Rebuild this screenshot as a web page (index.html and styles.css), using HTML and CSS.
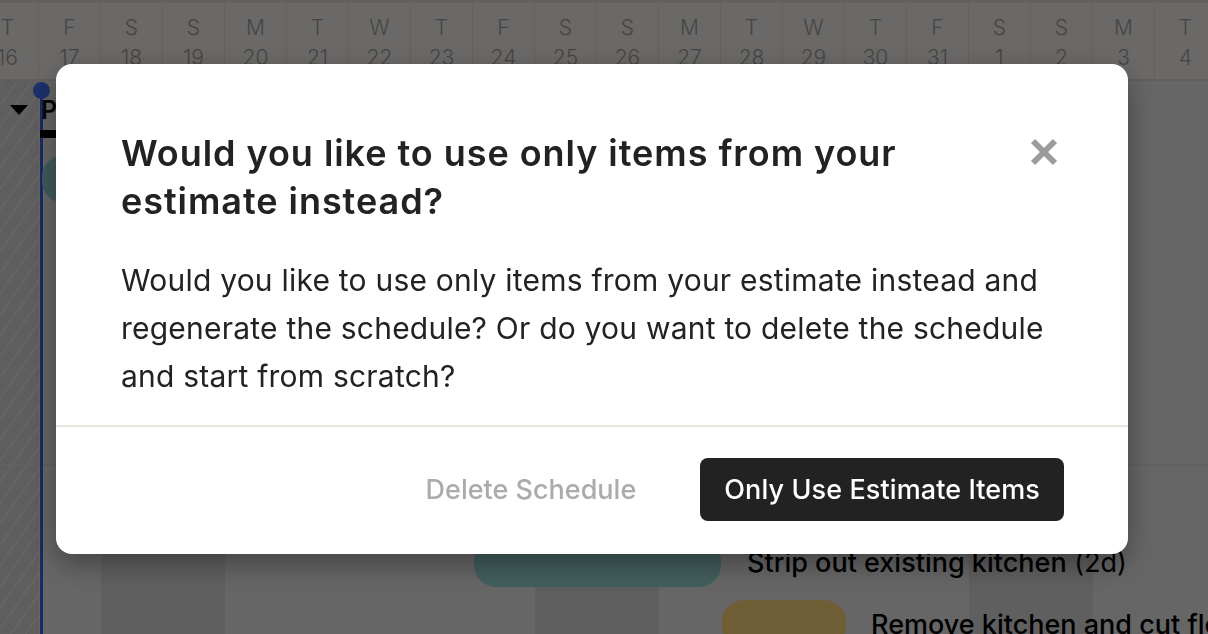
FILE: index.html
```html
<!DOCTYPE html>
<html lang="en">
<head>
<meta charset="utf-8">
<title>Schedule</title>
<link rel="stylesheet" href="styles.css">
</head>
<body>
<div class="app">
  <div class="days">
    <div class="day"><span>T</span><span>16</span></div>
    <div class="day"><span>F</span><span>17</span></div>
    <div class="day weekend"><span>S</span><span>18</span></div>
    <div class="day weekend"><span>S</span><span>19</span></div>
    <div class="day"><span>M</span><span>20</span></div>
    <div class="day"><span>T</span><span>21</span></div>
    <div class="day"><span>W</span><span>22</span></div>
    <div class="day"><span>T</span><span>23</span></div>
    <div class="day"><span>F</span><span>24</span></div>
    <div class="day weekend"><span>S</span><span>25</span></div>
    <div class="day weekend"><span>S</span><span>26</span></div>
    <div class="day"><span>M</span><span>27</span></div>
    <div class="day"><span>T</span><span>28</span></div>
    <div class="day"><span>W</span><span>29</span></div>
    <div class="day"><span>T</span><span>30</span></div>
    <div class="day"><span>F</span><span>31</span></div>
    <div class="day weekend"><span>S</span><span>1</span></div>
    <div class="day weekend"><span>S</span><span>2</span></div>
    <div class="day"><span>M</span><span>3</span></div>
    <div class="day"><span>T</span><span>4</span></div>
  </div>
  <div class="chart">
    <div class="cols">
      <div class="col past"></div>
      <div class="col"></div>
      <div class="col weekend"></div>
      <div class="col weekend"></div>
      <div class="col"></div>
      <div class="col"></div>
      <div class="col"></div>
      <div class="col"></div>
      <div class="col"></div>
      <div class="col weekend"></div>
      <div class="col weekend"></div>
      <div class="col"></div>
      <div class="col"></div>
      <div class="col"></div>
      <div class="col"></div>
      <div class="col"></div>
      <div class="col weekend"></div>
      <div class="col weekend"></div>
      <div class="col"></div>
      <div class="col"></div>
    </div>
    <div class="row-line"></div>
    <div class="today-line"></div>
    <div class="today-dot"></div>
    <div class="group">
      <span class="caret"></span>
      <span class="group-name">Phase 1</span>
    </div>
    <div class="summary-bar"></div>
    <div class="bar teal-top"></div>
    <div class="bar strip"></div>
    <div class="task-label strip-label"><b>Strip out existing kitchen</b> (2d)</div>
    <div class="bar remove"></div>
    <div class="task-label remove-label"><b>Remove kitchen and cut floor</b></div>
  </div>
</div>

<div class="overlay">
  <div class="modal" role="dialog">
    <div class="modal-body">
      <div class="title-row">
        <h2 class="title">Would you like to use only items from your estimate instead?</h2>
        <button class="close" aria-label="Close">
          <svg width="28" height="28" viewBox="0 0 28 28"><path d="M3 3 L25 25 M25 3 L3 25" stroke="#9c9c9c" stroke-width="6" fill="none"/></svg>
        </button>
      </div>
      <p class="text">Would you like to use only items from your estimate instead and regenerate the schedule? Or do you want to delete the schedule and start from scratch?</p>
    </div>
    <div class="modal-footer">
      <button class="btn-link">Delete Schedule</button>
      <button class="btn-primary">Only Use Estimate Items</button>
    </div>
  </div>
</div>
</body>
</html>
```
FILE: styles.css
```css
* { box-sizing: border-box; }
html, body { margin: 0; padding: 0; }
body {
  width: 1208px;
  height: 634px;
  overflow: hidden;
  font-family: Inter, "Liberation Sans", sans-serif;
  color: #222;
  background: #cccccc;
}
.app {
  width: 1208px;
  height: 634px;
  display: flex;
  flex-direction: column;
  overflow: hidden;
}
.days {
  display: flex;
  margin-left: -23px;
  height: 81px;
  flex: none;
  border-top: 3px solid #c4c3bf;
  border-bottom: 2px solid #c0bfbb;
  background: #d5d3cf;
}
.day {
  flex: none;
  width: 62px;
  display: flex;
  flex-direction: column;
  align-items: center;
  padding-top: 10px;
  font-size: 21px;
  line-height: 30px;
  font-weight: 300;
  color: #8c8b8a;
  border-right: 1px solid #c6c5c1;
}
.day.weekend { background: #d6d0cb; }

.chart {
  position: relative;
  flex: 1;
}
.cols {
  display: flex;
  margin-left: -23px;
  height: 100%;
}
.col {
  flex: none;
  width: 62px;
  height: 100%;
  background: #cdcdcd;
}
.col.weekend { background: #bfbfbf; }
.col.past {
  background: repeating-linear-gradient(-55deg, #bcbcbc 0 10px, #c9c9c9 10px 12px);
}
.row-line {
  position: absolute;
  left: 0; right: 0;
  top: 383px;
  height: 2px;
  background: #c2c2c2;
}
.today-line {
  position: absolute;
  left: 40px;
  top: 9px;
  bottom: 0;
  width: 3px;
  background: #2f57d0;
}
.today-dot {
  position: absolute;
  left: 33px;
  top: 1px;
  width: 17px;
  height: 17px;
  border-radius: 50%;
  background: #3a61d8;
}
.group {
  position: absolute;
  left: 10px;
  top: 14px;
  display: flex;
  align-items: center;
  gap: 13px;
  font-size: 25px;
  font-weight: 600;
  color: #111;
}
.caret {
  width: 0; height: 0;
  border-left: 9px solid transparent;
  border-right: 9px solid transparent;
  border-top: 10px solid #000;
}
.summary-bar {
  position: absolute;
  left: 40px;
  top: 49px;
  width: 200px;
  height: 8px;
  background: #000;
}
.bar {
  position: absolute;
  border-radius: 22px;
}
.teal-top {
  left: 42px;
  top: 74px;
  width: 100px;
  height: 48px;
  background: #7eb6b4;
}
.strip {
  left: 474px;
  top: 458px;
  width: 247px;
  height: 48px;
  background: #85bcbb;
}
.remove {
  left: 722px;
  top: 519px;
  width: 124px;
  height: 48px;
  background: #dcbb6a;
}
.task-label {
  position: absolute;
  font-size: 27px;
  line-height: 32px;
  color: #000;
  white-space: nowrap;
}
.task-label b { font-weight: 500; }
.strip-label { left: 747px; top: 466px; }
.remove-label { left: 871px; top: 528px; }

.overlay {
  position: fixed;
  inset: 0;
  background: rgba(0, 0, 0, 0.5);
  padding: 64px 0 0 56px;
}
.modal {
  width: 1072px;
  background: #fff;
  border-radius: 16px;
  box-shadow: 0 10px 28px rgba(0, 0, 0, 0.35);
  overflow: hidden;
}
.modal-body {
  padding: 65px 64px 25px 65px;
}
.title-row {
  display: flex;
  justify-content: space-between;
  align-items: flex-start;
}
.title {
  margin: 0;
  max-width: 880px;
  font-size: 36px;
  line-height: 48px;
  font-weight: 600;
  letter-spacing: 0.95px;
  color: #222;
}
.close {
  margin: 9px 6px 0 0;
  padding: 0;
  border: 0;
  background: none;
  width: 28px;
  height: 28px;
  display: block;
}
.close svg { display: block; }
.text {
  margin: 31px 0 0;
  font-size: 30px;
  line-height: 48px;
  letter-spacing: 0.22px;
  color: #222;
}
.modal-footer {
  border-top: 2px solid #e6e6df;
  display: flex;
  justify-content: flex-end;
  align-items: center;
  gap: 64px;
  padding: 31px 64px 33px;
}
.btn-link {
  border: 0;
  background: none;
  padding: 0;
  font-family: inherit;
  font-size: 27px;
  font-weight: 500;
  color: #ababab;
}
.btn-primary {
  border: 0;
  height: 63px;
  padding: 0 24px;
  border-radius: 8px;
  background: #222;
  color: #fff;
  font-family: inherit;
  font-size: 27px;
  font-weight: 500;
  letter-spacing: 0.1px;
}
```
